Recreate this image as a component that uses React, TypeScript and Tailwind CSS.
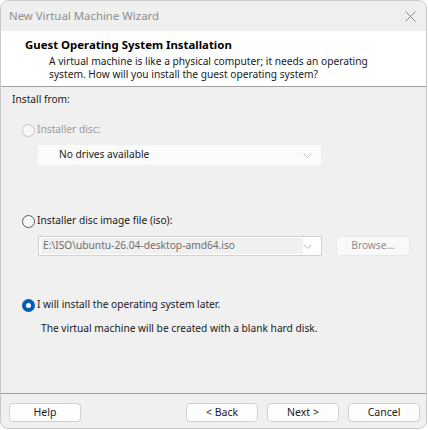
import React from 'react';

const font = { fontFamily: '"Noto Sans", "Open Sans", sans-serif' };

function Radio({ state }: { state: 'disabled' | 'off' | 'on' }) {
  if (state === 'on') {
    return (
      <span className="flex h-[13px] w-[13px] shrink-0 items-center justify-center rounded-full bg-[#005fb8]">
        <span className="h-[5px] w-[5px] rounded-full bg-white" />
      </span>
    );
  }
  return (
    <span
      className={
        state === 'disabled'
          ? 'h-[13px] w-[13px] shrink-0 rounded-full border border-[#c5c5c5] bg-[#f7f7f7]'
          : 'h-[13px] w-[13px] shrink-0 rounded-full border border-[#5a5a5a] bg-[#f7f7f7]'
      }
    />
  );
}

function Chevron({ color = '#b0b0b0' }: { color?: string }) {
  return (
    <svg width="9" height="5" viewBox="0 0 9 5" fill="none">
      <path d="M0.5 0.5 L4.5 4.5 L8.5 0.5" stroke={color} strokeWidth="1" />
    </svg>
  );
}

function Button({ label, className = '' }: { label: string; className?: string }) {
  return (
    <button
      className={`flex h-[19px] w-[72px] items-center justify-center rounded-[4px] border border-[#d0d0d0] bg-[#fdfdfd] text-[10.5px] text-[#1a1a1a] ${className}`}
    >
      {label}
    </button>
  );
}

export default function App() {
  return (
    <div className="h-[430px] w-[428px] bg-white" style={font}>
      <div className="flex h-[429px] w-[427px] flex-col overflow-hidden rounded-[8px] border border-[#c9c9c9] bg-[#f0f0f0]">
        {/* title bar */}
        <div className="flex h-[30px] shrink-0 items-center justify-between bg-[#efefef] pl-[8px] pr-[10px]">
          <span className="text-[11.4px] text-[#8e8e8e]">New Virtual Machine Wizard</span>
          <svg width="11" height="11" viewBox="0 0 11 11" fill="none">
            <path d="M0.5 0.5 L10.5 10.5 M10.5 0.5 L0.5 10.5" stroke="#8a8a8a" strokeWidth="1" />
          </svg>
        </div>

        {/* header */}
        <div className="h-[56px] shrink-0 border-b border-[#a0a0a0] bg-white pl-[24px] pt-[6px]">
          <div className="whitespace-nowrap text-[11.4px] font-bold leading-[16px] text-black">
            Guest Operating System Installation
          </div>
          <div className="mt-[2px] whitespace-nowrap pl-[24px] text-[10.2px] leading-[13px] text-[#1a1a1a]">
            A virtual machine is like a physical computer; it needs an operating
            <br />
            system. How will you install the guest operating system?
          </div>
        </div>

        {/* body */}
        <div className="flex-1 pl-[11px] pt-[4px] text-[10.2px] text-[#1a1a1a]">
          <div className="leading-[16px]">Install from:</div>

          <div className="mt-[15px] flex h-[16px] items-center gap-[2px] pl-[10px] text-[#9a9a9a]">
            <Radio state="disabled" />
            <span>Installer disc:</span>
          </div>

          <div className="ml-[26px] mt-[7px] flex h-[20px] w-[283px] items-center justify-between bg-[#fbfbfb] pl-[21px] pr-[9px] text-[#1a1a1a]">
            <span>No drives available</span>
            <Chevron color="#c0c0c0" />
          </div>

          <div className="mt-[48px] flex h-[16px] items-center gap-[2px] pl-[10px]">
            <Radio state="off" />
            <span>Installer disc image file (iso):</span>
          </div>

          <div className="mt-[7px] flex items-center">
            <div className="ml-[26px] flex h-[20px] w-[284px] items-center justify-between border border-[#d2d2d2] bg-white pr-[9px]">
              <span className="ml-[2px] flex h-[16px] w-[262px] items-center bg-[#f0f0f0] pl-[2px] text-[#6e6e6e]">
                E:\ISO\ubuntu-26.04-desktop-amd64.iso
              </span>
              <Chevron color="#c0c0c0" />
            </div>
            <div className="ml-[14px] flex h-[20px] w-[74px] items-center justify-center rounded-[3px] border border-[#e8e8e8] bg-[#f9f9f9] text-[#8e8e8e]">
              Browse...
            </div>
          </div>

          <div className="mt-[41px] flex h-[16px] items-center gap-[2px] pl-[10px]">
            <Radio state="on" />
            <span>I will install the operating system later.</span>
          </div>

          <div className="mt-[7px] pl-[29px] leading-[16px]">
            The virtual machine will be created with a blank hard disk.
          </div>
        </div>

        {/* footer */}
        <div className="flex h-[35px] shrink-0 items-start border-t border-[#a0a0a0] pl-[8px] pt-[9px]">
          <Button label="Help" />
          <Button label="< Back" className="ml-[105px]" />
          <Button label="Next >" className="ml-[9px]" />
          <Button label="Cancel" className="ml-[9px]" />
        </div>
      </div>
    </div>
  );
}
